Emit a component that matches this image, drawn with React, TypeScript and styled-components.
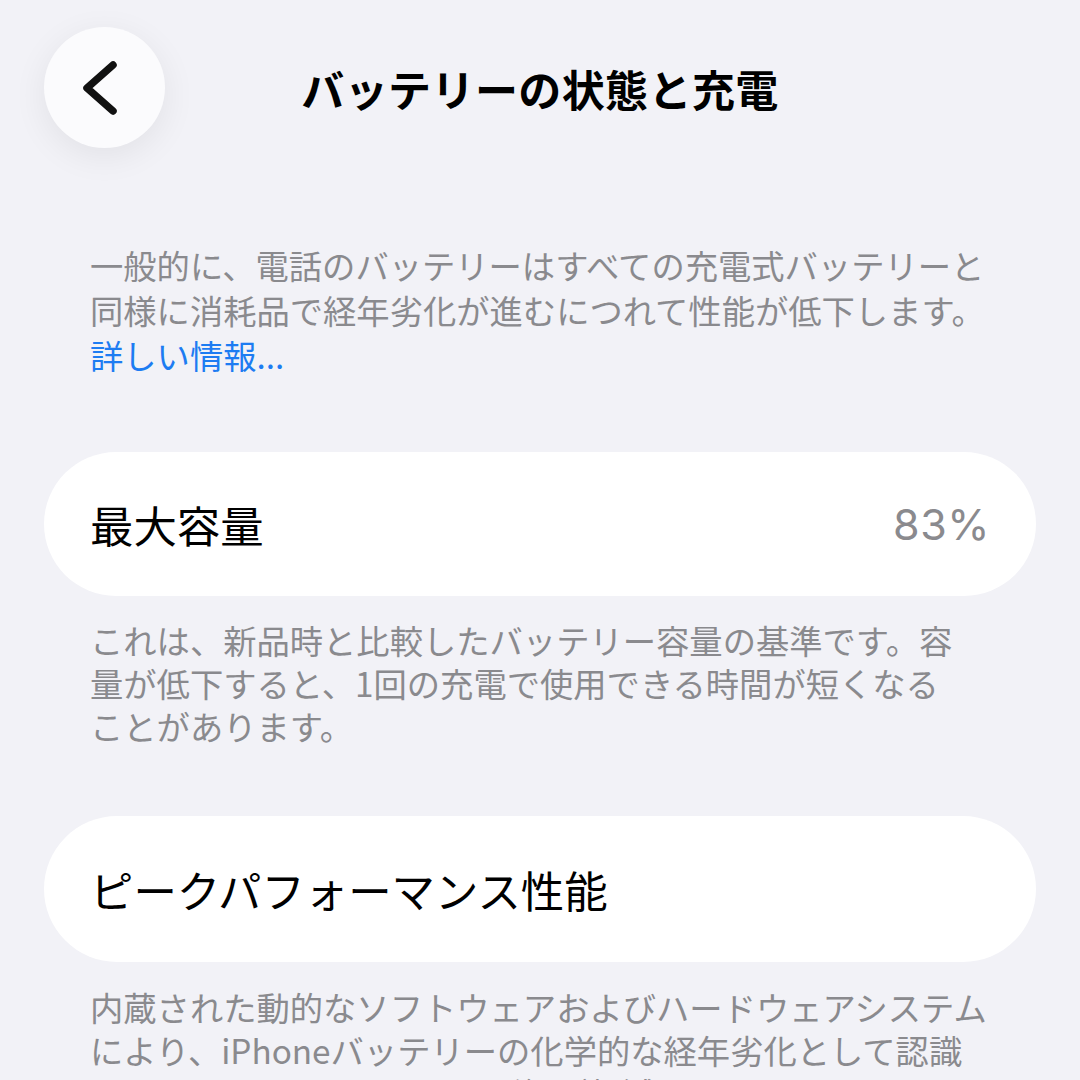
import React from "react";
import styled, { createGlobalStyle } from "styled-components";

const GlobalStyle = createGlobalStyle`
  html, body {
    margin: 0;
    padding: 0;
    background: #f2f2f7;
    height: 1080px;
    overflow: hidden;
  }
  body {
    font-family: "Noto Sans CJK JP", "Noto Sans", sans-serif;
    -webkit-font-smoothing: antialiased;
  }
`;

const Page = styled.div`
  width: 1080px;
  box-sizing: border-box;
  padding: 27px 44px 0;
  display: flex;
  flex-direction: column;
`;

const Header = styled.header`
  display: grid;
  grid-template-columns: 121px 1fr 121px;
  align-items: center;
  height: 121px;
`;

const BackButton = styled.button`
  width: 121px;
  height: 121px;
  border-radius: 50%;
  border: none;
  padding: 0;
  background: #fbfbfd;
  box-shadow: 0 8px 34px rgba(0, 0, 0, 0.07);
  display: flex;
  align-items: center;
  justify-content: center;
  cursor: pointer;
`;

const Title = styled.h1`
  margin: 0;
  text-align: center;
  font-size: 43px;
  font-weight: 700;
  color: #000;
  letter-spacing: 0.4px;
  white-space: nowrap;
`;

const Footnote = styled.p<{ $top: number; $lh: number }>`
  margin: ${(p) => p.$top}px 0 0;
  padding: 0 46px;
  font-size: 33.3px;
  line-height: ${(p) => p.$lh}px;
  color: #8a8a8e;
  white-space: nowrap;
`;

const Link = styled.a`
  color: #1d7cf2;
  text-decoration: none;
`;

const Card = styled.div<{ $top: number; $h: number }>`
  margin-top: ${(p) => p.$top}px;
  height: ${(p) => p.$h}px;
  border-radius: ${(p) => p.$h / 2}px;
  background: #ffffff;
  padding: 0 46px;
  display: flex;
  align-items: center;
  justify-content: space-between;
`;

const CardLabel = styled.span`
  font-size: 43.4px;
  color: #000;
  white-space: nowrap;
`;

const CardValue = styled.span`
  font-family: Inter, "Noto Sans", sans-serif;
  font-size: 43px;
  font-weight: 400;
  color: #8a8a8e;
  letter-spacing: 0.5px;
`;

const ChevronLeft = () => (
  <svg width="121" height="121" viewBox="0 0 121 121" fill="none">
    <polyline
      points="69,38 43,61 69,84"
      stroke="#111"
      strokeWidth="7.5"
      strokeLinecap="round"
      strokeLinejoin="round"
    />
  </svg>
);

export default function App() {
  return (
    <>
      <GlobalStyle />
      <Page>
        <Header>
          <BackButton aria-label="戻る">
            <ChevronLeft />
          </BackButton>
          <Title>バッテリーの状態と充電</Title>
          <span />
        </Header>

        <Footnote $top={94} $lh={45}>
          一般的に、電話のバッテリーはすべての充電式バッテリーと
          <br />
          同様に消耗品で経年劣化が進むにつれて性能が低下します。
          <br />
          <Link href="#">詳しい情報...</Link>
        </Footnote>

        <Card $top={75} $h={144}>
          <CardLabel>最大容量</CardLabel>
          <CardValue>83%</CardValue>
        </Card>

        <Footnote $top={22} $lh={43}>
          これは、新品時と比較したバッテリー容量の基準です。容
          <br />
          量が低下すると、1回の充電で使用できる時間が短くなる
          <br />
          ことがあります。
        </Footnote>

        <Card $top={69} $h={146}>
          <CardLabel>ピークパフォーマンス性能</CardLabel>
        </Card>

        <Footnote $top={23} $lh={43}>
          内蔵された動的なソフトウェアおよびハードウェアシステム
          <br />
          により、iPhoneバッテリーの化学的な経年劣化として認識
          <br />
          されるパフォーマンスへの影響が軽減されます。
        </Footnote>
      </Page>
    </>
  );
}
